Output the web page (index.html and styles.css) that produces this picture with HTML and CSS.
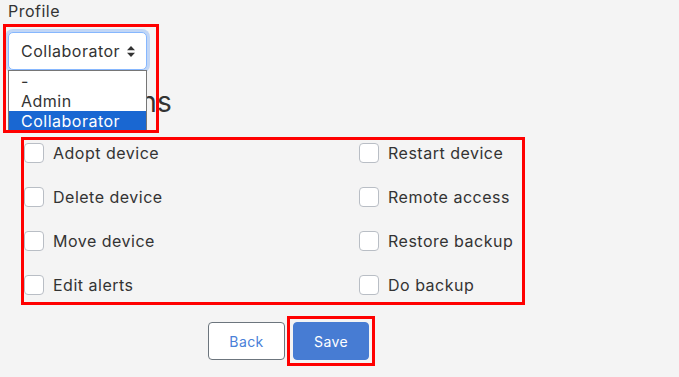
FILE: index.html
```html
<!DOCTYPE html>
<html lang="en">
<head>
<meta charset="utf-8">
<title>Profile</title>
<link rel="stylesheet" href="styles.css">
</head>
<body>
<div class="page">
  <div class="field-label">Profile</div>
  <div class="select-wrap">
    <div class="select">
      <span>Collaborator</span>
      <svg class="arrows" width="8" height="11" viewBox="0 0 8 11"><path d="M4 0 L8 4.3 H0 Z M0 6.7 H8 L4 11 Z" fill="#333"/></svg>
    </div>
    <div class="options">
      <div class="option">-</div>
      <div class="option">Admin</div>
      <div class="option selected">Collaborator</div>
    </div>
    <div class="mark mark-select"></div>
  </div>
  <h3 class="heading">Permissions</h3>
  <div class="perms">
    <label class="check"><span class="box"></span><span class="text">Adopt device</span></label>
    <label class="check"><span class="box"></span><span class="text">Restart device</span></label>
    <label class="check"><span class="box"></span><span class="text">Delete device</span></label>
    <label class="check"><span class="box"></span><span class="text">Remote access</span></label>
    <label class="check"><span class="box"></span><span class="text">Move device</span></label>
    <label class="check"><span class="box"></span><span class="text">Restore backup</span></label>
    <label class="check"><span class="box"></span><span class="text">Edit alerts</span></label>
    <label class="check"><span class="box"></span><span class="text">Do backup</span></label>
  </div>
  <div class="actions">
    <button class="btn btn-back">Back</button>
    <div class="save-frame">
      <button class="btn btn-save">Save</button>
    </div>
  </div>
</div>
</body>
</html>
```
FILE: styles.css
```css
html, body {
  margin: 0;
  padding: 0;
  background: #f4f4f4;
}
body {
  font-family: Inter, "DejaVu Sans", sans-serif;
  font-size: 16px;
  letter-spacing: 0.5px;
  color: #333;
}
.page {
  padding: 0 0 8px 8px;
}
.field-label {
  line-height: 22px;
  height: 22px;
}
.select-wrap {
  position: relative;
  margin-top: 10px;
  width: 139px;
}
.select {
  box-sizing: border-box;
  height: 38px;
  border: 1px solid #86b7fe;
  border-radius: 5px;
  background: #fff;
  box-shadow: 0 0 0 3px rgba(13, 110, 253, 0.22);
  display: flex;
  align-items: center;
  justify-content: space-between;
  padding: 0 11px 0 12px;
}
.arrows {
  display: block;
}
.options {
  position: absolute;
  top: 38px;
  left: 0;
  width: 139px;
  box-sizing: border-box;
  background: #fff;
  border: 1px solid #767676;
  z-index: 2;
}
.option {
  line-height: 20px;
  height: 20px;
  padding-left: 12px;
}
.option.selected {
  background: #1967d2;
  color: #fff;
}
.mark {
  position: absolute;
  box-sizing: border-box;
  border: 3px solid #ff0000;
  z-index: 3;
  pointer-events: none;
}
.mark-select {
  left: -5px;
  top: -8px;
  width: 156px;
  height: 109px;
}
.heading {
  font-size: 28px;
  font-weight: 400;
  line-height: 34px;
  letter-spacing: 0.3px;
  margin: 15px 0 0 0;
}
.perms {
  box-sizing: border-box;
  margin-top: 18px;
  margin-left: 13px;
  width: 504px;
  border: 3px solid #ff0000;
  padding: 1px 0 5px 0;
  display: grid;
  grid-template-columns: 335px 1fr;
  row-gap: 20px;
}
.check {
  display: flex;
  align-items: center;
  height: 24px;
  line-height: 24px;
}
.box {
  box-sizing: border-box;
  width: 20px;
  height: 20px;
  border: 1px solid #b9bec5;
  border-radius: 4px;
  background: #fff;
  flex: none;
}
.text {
  margin-left: 9px;
}
.actions {
  display: flex;
  align-items: center;
  gap: 2px;
  margin-top: 11px;
  padding-left: 200px;
}
.btn {
  box-sizing: border-box;
  height: 38px;
  font-family: Inter, "DejaVu Sans", sans-serif;
  font-size: 14px;
  letter-spacing: 0.4px;
  border-radius: 4px;
  padding: 0;
  cursor: pointer;
  display: block;
}
.btn-back {
  width: 77px;
  background: #fff;
  color: #4a80d8;
  border: 1px solid #6c757d;
}
.save-frame {
  border: 3px solid #ff0000;
  padding: 3px;
}
.btn-save {
  width: 76px;
  background: #477cd3;
  color: #fff;
  border: 1px solid #477cd3;
}
```
